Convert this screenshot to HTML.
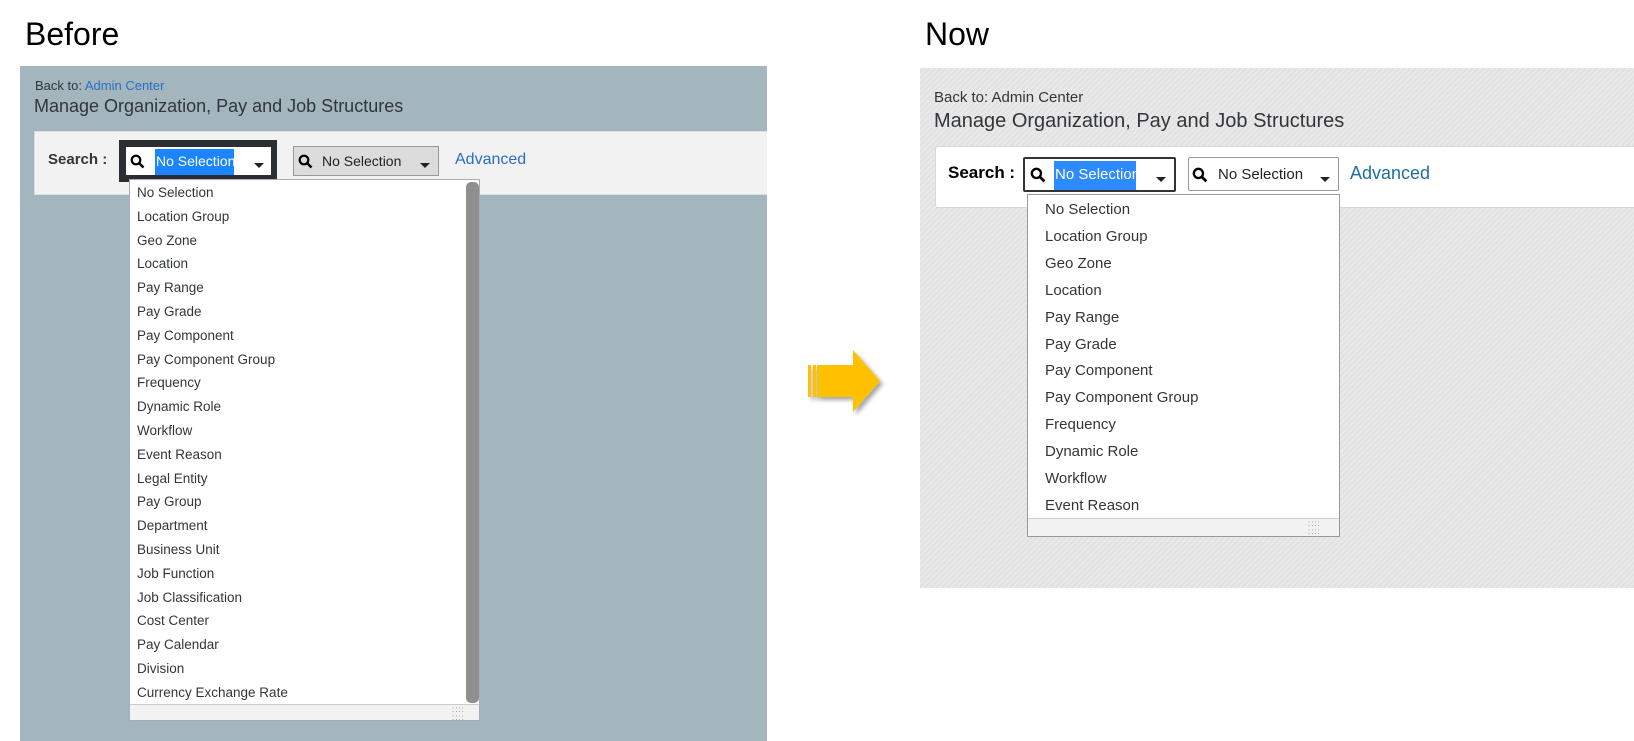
<!DOCTYPE html>
<html><head><meta charset="utf-8"><style>
*{margin:0;padding:0;box-sizing:border-box}
body{width:1634px;height:741px;background:#fff;position:relative;overflow:hidden;font-family:"Liberation Sans",Arial,sans-serif;}
.a{position:absolute;white-space:nowrap}
.hdr{font-family:"Liberation Sans",sans-serif;font-size:32px;color:#000}
.lp{left:20px;top:66px;width:747px;height:675px;background:#a3b5bd}
.rp{left:920px;top:68px;width:714px;height:520px;background:#e6e6e6;background-image:repeating-linear-gradient(135deg,#e9e9e9 0 2px,#e2e2e2 2px 4px)}
</style></head><body>
<div class="a hdr" style="left:25px;top:16px">Before</div>
<div class="a hdr" style="left:925px;top:16px">Now</div>

<div class="a lp"></div>
<div class="a" style="left:35px;top:78px;font-size:13px;color:#32363a">Back to: <span style="color:#2a6ec8">Admin Center</span></div>
<div class="a" style="left:34px;top:96px;font-size:18px;color:#32363a">Manage Organization, Pay and Job Structures</div>
<div class="a" style="left:34px;top:131px;width:733px;height:64px;background:#f2f2f2;border:1px solid #ddd;border-right:none"></div>
<div class="a" style="left:48px;top:151px;font-size:15px;font-weight:bold;color:#32363a">Search :</div>
<div class="a" style="left:119px;top:140px;width:158px;height:42px;background:#2b2f33"></div>
<div class="a" style="left:126px;top:147px;width:145px;height:28px;background:#fff"></div>
<svg class="a" style="left:130px;top:154px" width="15" height="15" viewBox="0 0 15 15"><circle cx="6" cy="6" r="4.3" fill="none" stroke="#000" stroke-width="2.2"/><path d="M9 9l4.5 4.5" stroke="#000" stroke-width="2.6"/></svg>
<div class="a" style="left:155px;top:149px;width:79px;height:26px;background:#1a85ff"></div>
<div class="a" style="left:156px;top:153px;font-size:14px;color:#fff">No Selection</div>
<div class="a" style="left:254px;top:163px;border:5px solid transparent;border-top:5px solid #222;border-bottom:0"></div>
<div class="a" style="left:293px;top:146px;width:146px;height:30px;background:#dcdcdc;border:1px solid #999"></div>
<svg class="a" style="left:298px;top:154px" width="15" height="15" viewBox="0 0 15 15"><circle cx="6" cy="6" r="4.3" fill="none" stroke="#000" stroke-width="2.2"/><path d="M9 9l4.5 4.5" stroke="#000" stroke-width="2.6"/></svg>
<div class="a" style="left:322px;top:153px;font-size:14px;color:#222">No Selection</div>
<div class="a" style="left:420px;top:163px;border:5px solid transparent;border-top:5px solid #222;border-bottom:0"></div>
<div class="a" style="left:455px;top:151px;font-size:16px;color:#2a6ec8">Advanced</div>
<div class="a" style="left:129px;top:179px;width:351px;height:542px;background:#fff;border:1px solid #aab"></div>
<div class="a" style="left:466px;top:182px;width:13px;height:521px;background:#8f8f8f;border-radius:5px"></div>
<div class="a" style="left:130px;top:704px;width:349px;height:16px;background:#f2f2f2;border-top:1px solid #ccc"></div>
<div class="a" style="left:452px;top:706px;font-size:8px;line-height:8px;color:#888;letter-spacing:1px">::::<br>::::</div>
<div class="a" style="left:137px;top:181px;font-size:13.5px;color:#32363a;line-height:23.8px">No Selection<br>Location Group<br>Geo Zone<br>Location<br>Pay Range<br>Pay Grade<br>Pay Component<br>Pay Component Group<br>Frequency<br>Dynamic Role<br>Workflow<br>Event Reason<br>Legal Entity<br>Pay Group<br>Department<br>Business Unit<br>Job Function<br>Job Classification<br>Cost Center<br>Pay Calendar<br>Division<br>Currency Exchange Rate</div>

<svg class="a" style="left:800px;top:345px" width="95" height="75" viewBox="0 0 95 75"><defs><filter id="s"><feDropShadow dx="3" dy="3" stdDeviation="2" flood-color="#000" flood-opacity=".35"/></filter></defs><g filter="url(#s)" fill="#ffc000"><rect x="8" y="20" width="3" height="32"/><rect x="13" y="20" width="3" height="32"/><path d="M17 20h36V5l27 31-27 31V52H17z"/></g></svg>

<div class="a rp"></div>
<div class="a" style="left:934px;top:89px;font-size:15px;color:#32363a">Back to: Admin Center</div>
<div class="a" style="left:934px;top:110px;font-size:20px;color:#32363a">Manage Organization, Pay and Job Structures</div>
<div class="a" style="left:935px;top:146px;width:699px;height:62px;background:#fff;border:1px solid #d8d8d8;border-right:none;border-radius:3px 0 0 3px"></div>
<div class="a" style="left:948px;top:163px;font-size:17px;font-weight:bold;color:#000">Search :</div>
<div class="a" style="left:1023px;top:157px;width:153px;height:35px;background:#fff;border:2px solid #333;border-radius:2px"></div>
<svg class="a" style="left:1030px;top:167px" width="16" height="16" viewBox="0 0 15 15"><circle cx="6" cy="6" r="4.3" fill="none" stroke="#000" stroke-width="2.2"/><path d="M9 9l4.5 4.5" stroke="#000" stroke-width="2.6"/></svg>
<div class="a" style="left:1054px;top:161px;width:82px;height:29px;background:#2e8bff"></div>
<div class="a" style="left:1055px;top:166px;font-size:15px;color:#fff">No Selection</div>
<div class="a" style="left:1156px;top:177px;border:5px solid transparent;border-top:5px solid #222;border-bottom:0"></div>
<div class="a" style="left:1188px;top:157px;width:151px;height:34px;background:#fff;border:1px solid #999;border-radius:2px"></div>
<svg class="a" style="left:1192px;top:167px" width="16" height="16" viewBox="0 0 15 15"><circle cx="6" cy="6" r="4.3" fill="none" stroke="#000" stroke-width="2.2"/><path d="M9 9l4.5 4.5" stroke="#000" stroke-width="2.6"/></svg>
<div class="a" style="left:1218px;top:166px;font-size:15px;color:#222">No Selection</div>
<div class="a" style="left:1320px;top:177px;border:5px solid transparent;border-top:5px solid #222;border-bottom:0"></div>
<div class="a" style="left:1350px;top:163px;font-size:18px;color:#1f6f9f">Advanced</div>
<div class="a" style="left:1027px;top:194px;width:313px;height:343px;background:#fff;border:1px solid #999"></div>
<div class="a" style="left:1028px;top:518px;width:311px;height:18px;background:#f2f2f2;border-top:1px solid #ccc"></div>
<div class="a" style="left:1308px;top:520px;font-size:8px;line-height:8px;color:#888;letter-spacing:1px">::::<br>::::</div>
<div class="a" style="left:1045px;top:197px;font-size:15px;color:#32363a;line-height:26.9px">No Selection<br>Location Group<br>Geo Zone<br>Location<br>Pay Range<br>Pay Grade<br>Pay Component<br>Pay Component Group<br>Frequency<br>Dynamic Role<br>Workflow<br>Event Reason</div>
</body></html>
